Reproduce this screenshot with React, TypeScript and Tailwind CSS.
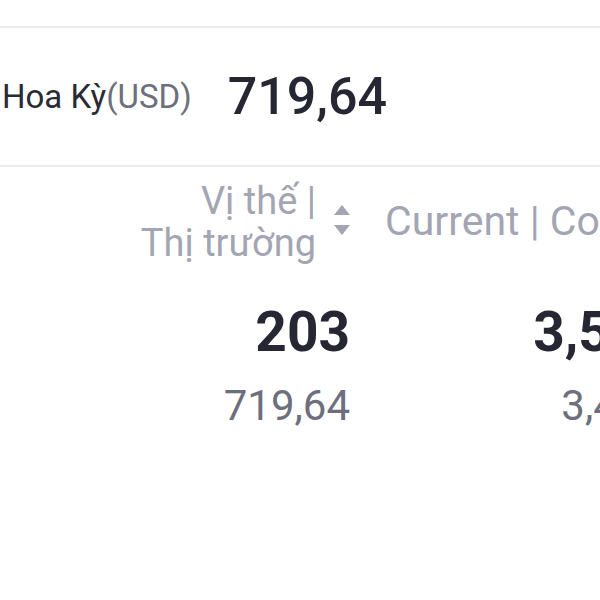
import React from 'react';

const rows = [{ position: '203', market: '719,64', current: '3,512', cost: '3,468' }];

function SortIcon() {
  return (
    <svg width="16" height="30" viewBox="0 0 16 30" className="shrink-0 -mt-[4px]">
      <path d="M8 0 L16 10 L0 10 Z" fill="#a3a5b3" />
      <path d="M0 20 L16 20 L8 30 Z" fill="#a3a5b3" />
    </svg>
  );
}

export default function App() {
  return (
    <div className="w-[600px] h-[600px] overflow-hidden bg-white font-['Roboto',sans-serif]">
      <div className="h-[28px] border-b-2 border-[#ececef]" />

      <div className="h-[139px] flex items-center border-b-2 border-[#ececef] whitespace-nowrap">
        <div className="pl-[2px] text-[33px] text-[#2a2a35]">
          Hoa Kỳ<span className="text-[#6c6f7e]">(USD)</span>
        </div>
        <div className="ml-[36px] text-[52px] font-medium text-[#272733]">719,64</div>
      </div>

      <div className="flex whitespace-nowrap">
        <div className="w-[352px] shrink-0 flex items-center justify-end gap-[18px] pr-[2px] pt-[13px]">
          <div className="text-right text-[38px] leading-[42px] text-[#a3a5b3]">
            <div>Vị thế |</div>
            <div>Thị trường</div>
          </div>
          <SortIcon />
        </div>
        <div className="pl-[33px] pt-[13px] flex items-center text-[41px] text-[#a3a5b3]">
          Current | Cost
        </div>
      </div>

      {rows.map((r) => (
        <div key={r.position} className="flex whitespace-nowrap pt-[36px]">
          <div className="w-[352px] shrink-0 text-right pr-[2px]">
            <div className="text-[55px] font-bold leading-[64px] text-[#272733]">{r.position}</div>
            <div className="mt-[17px] text-[42px] leading-[50px] text-[#6c6f7e]">{r.market}</div>
          </div>
          <div className="w-[321px] shrink-0 text-right">
            <div className="text-[55px] font-bold leading-[64px] text-[#272733]">{r.current}</div>
            <div className="mt-[17px] pr-[9px] text-[42px] leading-[50px] text-[#6c6f7e]">{r.cost}</div>
          </div>
        </div>
      ))}
    </div>
  );
}
